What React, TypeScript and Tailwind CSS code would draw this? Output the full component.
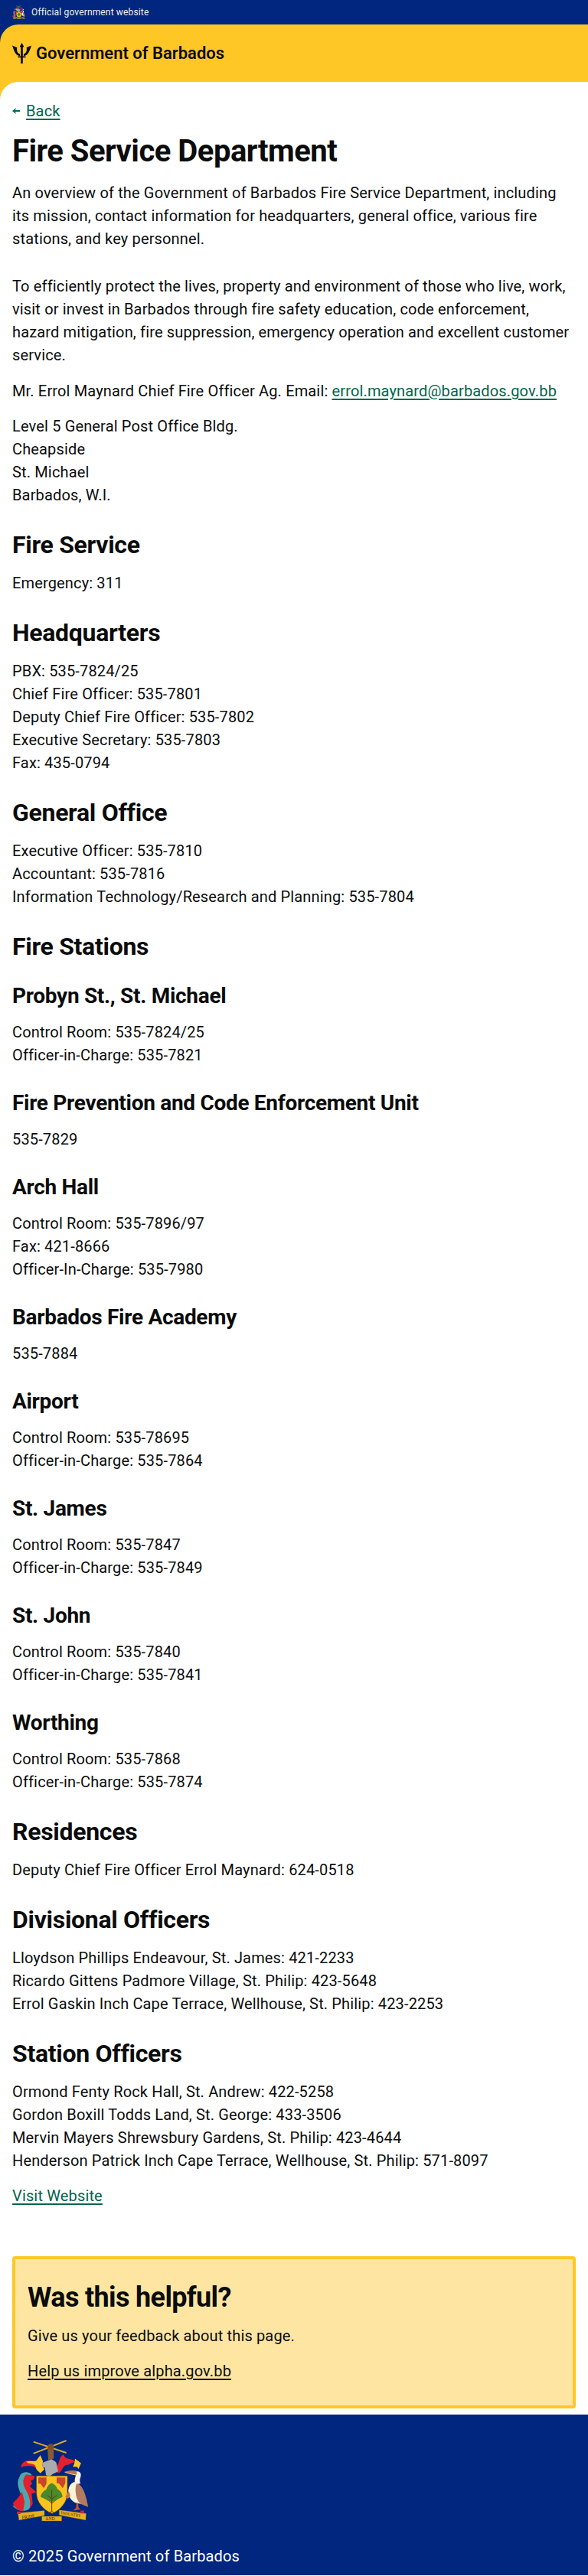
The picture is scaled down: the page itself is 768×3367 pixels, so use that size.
import React from "react";

const Crest = ({ className, ribbonText = false }: { className: string; ribbonText?: boolean }) => (
  <svg viewBox="50 148 300 322" className={className}>
    <path d="M133 156L262 199M262 151L133 202" stroke="#d6a92a" strokeWidth="6" />
    <path d="M188 178l24-6 1 50-22 4z" fill="#8a5a30" />
    <circle cx="201" cy="176" r="12" fill="#7a4f2a" />
    <path d="M83 256c4-26 34-34 60-20 10 4 18 8 24 14l-6 28c-10-6-12-18-22-22-12-8-36-8-56 0z" fill="#e3202e" />
    <path d="M104 234c14-4 30 0 40-4l16-22 10 24-2 18 8 14-16 16-14-14c-6-10-2-18-14-22-10-4-18 0-28-10z" fill="#fcc526" />
    <path d="M228 280c-6-14-6-30 4-40 2-16 8-28 18-34 6 8 6 14 18 16 14 2 24 6 34 14-12 0-22 2-30 10-14-2-20 8-26 16-2 8-8 14-18 18z" fill="#e3202e" />
    <path d="M296 222l24 18-10 22-6-8h-16c4-8 8-16 8-32z" fill="#fcc526" />
    <path d="M168 238l36-14 18 12 8 36-24 12-12 12-12-10-4-28-10-4z" fill="#a9abae" />
    <path d="M145 290h121v66c0 38-28 68-60 82-34-14-61-44-61-82z" fill="#fcc21e" stroke="#8a6a10" strokeWidth="1.5" />
    <path d="M152 296h32v24l-10 18-14-18h-8zM224 296h34v22l-10 20-14-18-10-2z" fill="#c9452c" />
    <path d="M205 345v85M205 398l-26-24M205 398l30-26M205 375l-20-18M205 375l22-18M205 430l-14 6M205 430l14 6" stroke="#5b3a18" strokeWidth="3" fill="none" />
    <path d="M205 318c14 6 20 16 22 24 10 4 20 16 20 30-8 6-16 6-24 14-8 6-30 6-36 0-8-6-20-10-26-14 2-14 12-24 22-28 4-12 10-22 22-26z" fill="#4b8a2a" />
    <path d="M205 345v50M205 380l-18-14M205 380l20-14" stroke="#5b3a18" strokeWidth="3" fill="none" />
    <path d="M82 284c14-14 36-10 44 2l-8 8c-12-4-22-2-24 12-2 14 12 30 20 46 8 18 12 40 6 60-4 14-24 18-40 14-14-4-24-12-30-20 20 6 34 4 38-10 4-16-4-32-10-48-6-18-10-34-2-50z" fill="#4ea6ae" />
    <path d="M104 284l34 6-4 14-12 6 6 10-10 10 26 24-18 6 4 40-14 22c8-24 2-48-8-68-10-18-18-30-14-48 2-10 6-18 10-22z" fill="#e3202e" />
    <path d="M52 398c12-14 26-26 36-46l10 40-6 38c-18-4-32-14-40-32z" fill="#e3202e" />
    <path d="M254 276c24-6 44-6 52-4 12 0 16 12 12 22-4 10-4 18 0 26l-22 0c-2-12 0-24 4-32-14-2-30-6-46-12z" fill="#f7f5ea" />
    <path d="M254 274c20-6 38-6 50-2l-2 14c-18-2-34-6-48-12z" fill="#c4764a" />
    <path d="M292 314c-20 8-26 34-20 54 8 18 20 28 34 30l30 4-28-88z" fill="#f8f4d8" />
    <path d="M302 320c20 0 36 34 46 92-20-8-36-12-42-28-6-14-12-44-4-64z" fill="#b57b5e" />
    <path d="M258 372l14-22 6 20-10 10z" fill="#c4764a" />
    <path d="M302 396l6 0 2 18 8 8-30 4 12-10z" fill="#c4542c" />
    <path d="M72 436l104-10v20l-100 18z" fill="#e7b020" stroke="#8a6a10" strokeWidth="1" />
    <path d="M166 449h78v18h-78z" fill="#e7b020" stroke="#8a6a10" strokeWidth="1" />
    <path d="M234 424l106 14-2 26-104-20z" fill="#e7b020" stroke="#8a6a10" strokeWidth="1" />
    <path d="M68 430h14v10H68zM318 426h14v12h-14z" fill="#e3202e" />
    {ribbonText && (
      <>
        <text x="88" y="460" fontSize="18" fontFamily="Liberation Serif" fill="#3a2c08" transform="rotate(-8 88 460)">PRIDE</text>
        <text x="180" y="465" fontSize="17" fontFamily="Liberation Serif" fill="#3a2c08">AND</text>
        <text x="240" y="440" fontSize="16" fontFamily="Liberation Serif" fill="#3a2c08" transform="rotate(9 240 440)">INDUSTRY</text>
      </>
    )}
  </svg>
);

const Trident = () => (
  <svg viewBox="0 0 74 80" className="w-[25px] h-[27px] shrink-0">
    <path
      fill="#0b0c0c"
      d="M37 0l8 14-4 4v34h11v5H41v23h-8V57H22v-5h11V18l-4-4zM0 10c7 3 12 5 19 8-3 12 1 23 11 26v7C13 49 7 33 0 10zM74 10c-7 3-12 5-19 8 3 12-1 23-11 26v7c17-2 23-18 30-41z"
    />
  </svg>
);

const BackArrow = () => (
  <svg viewBox="0 0 10 8" className="w-[10px] h-[8px]">
    <path d="M0 4l5-4-1 3h6v2H4l1 3z" fill="#006a5b" />
  </svg>
);

const H2 = ({ children, flush }: { children: React.ReactNode; flush?: boolean }) => (
  <h2 className={flush ? "text-[32px] leading-[40px] font-bold tracking-[-0.3px] mt-[30px]" : "text-[32px] leading-[40px] font-bold tracking-[-0.3px] mt-[30px] mb-[15px]"}>
    {children}
  </h2>
);
const H3 = ({ children, first }: { children: React.ReactNode; first?: boolean }) => (
  <h3 className={first ? "text-[28px] leading-[36px] font-bold tracking-[-0.3px] mt-[27px] mb-[14px]" : "text-[28px] leading-[36px] font-bold tracking-[-0.3px] mt-[30px] mb-[14px]"}>
    {children}
  </h3>
);
const P = ({ lines }: { lines: string[] }) => (
  <p className="text-[20px] leading-[30px] tracking-[0.15px]">
    {lines.map((l, i) => (
      <React.Fragment key={l}>
        {i > 0 && <br />}
        {l}
      </React.Fragment>
    ))}
  </p>
);

const sections: Array<[string, string, string[]]> = [
  ["h2", "Fire Service", ["Emergency: 311"]],
  ["h2", "Headquarters", ["PBX: 535-7824/25", "Chief Fire Officer: 535-7801", "Deputy Chief Fire Officer: 535-7802", "Executive Secretary: 535-7803", "Fax: 435-0794"]],
  ["h2", "General Office", ["Executive Officer: 535-7810", "Accountant: 535-7816", "Information Technology/Research and Planning: 535-7804"]],
  ["h2", "Fire Stations", []],
  ["h3", "Probyn St., St. Michael", ["Control Room: 535-7824/25", "Officer-in-Charge: 535-7821"]],
  ["h3", "Fire Prevention and Code Enforcement Unit", ["535-7829"]],
  ["h3", "Arch Hall", ["Control Room: 535-7896/97", "Fax: 421-8666", "Officer-In-Charge: 535-7980"]],
  ["h3", "Barbados Fire Academy", ["535-7884"]],
  ["h3", "Airport", ["Control Room: 535-78695", "Officer-in-Charge: 535-7864"]],
  ["h3", "St. James", ["Control Room: 535-7847", "Officer-in-Charge: 535-7849"]],
  ["h3", "St. John", ["Control Room: 535-7840", "Officer-in-Charge: 535-7841"]],
  ["h3", "Worthing", ["Control Room: 535-7868", "Officer-in-Charge: 535-7874"]],
  ["h2", "Residences", ["Deputy Chief Fire Officer Errol Maynard: 624-0518"]],
  ["h2", "Divisional Officers", ["Lloydson Phillips Endeavour, St. James: 421-2233", "Ricardo Gittens Padmore Village, St. Philip: 423-5648", "Errol Gaskin Inch Cape Terrace, Wellhouse, St. Philip: 423-2253"]],
  ["h2", "Station Officers", ["Ormond Fenty Rock Hall, St. Andrew: 422-5258", "Gordon Boxill Todds Land, St. George: 433-3506", "Mervin Mayers Shrewsbury Gardens, St. Philip: 423-4644", "Henderson Patrick Inch Cape Terrace, Wellhouse, St. Philip: 571-8097"]],
];

const linkClass = "text-[#00654a] underline decoration-2 underline-offset-[3px]";

export default function App() {
  return (
    <div className="font-['Roboto',sans-serif] text-[#0b0c0c] bg-white">
      <div className="bg-[#00267f] h-[32px] px-4 flex items-center gap-2">
        <Crest className="w-[17px] h-[18px]" />
        <span className="text-[#f0f0f0] text-[12px] tracking-[0.15px]">Official government website</span>
      </div>
      <div className="bg-[#00267f]">
        <div className="bg-[#ffc726] rounded-tl-[24px] h-[75px] px-4 flex items-center gap-[6px]">
          <Trident />
          <span className="text-[22px] font-semibold">Government of Barbados</span>
        </div>
      </div>
      <div className="bg-[#ffc726]">
        <div className="bg-white rounded-tl-[24px] px-4 pt-[23px]">
          <div className="flex items-center gap-2 text-[20px] leading-[30px] tracking-[0.15px]">
            <BackArrow />
            <a className={linkClass}>Back</a>
          </div>
          <h1 className="text-[40px] leading-[50px] font-bold tracking-[-0.5px] mt-[13px] mb-[14px]">Fire Service Department</h1>
          <p className="text-[20px] leading-[30px] tracking-[0.15px] mb-[32px]">
            An overview of the Government of Barbados Fire Service Department, including its mission, contact information for headquarters, general office, various fire stations, and key personnel.
          </p>
          <p className="text-[20px] leading-[30px] tracking-[0.15px] mb-[17px]">
            To efficiently protect the lives, property and environment of those who live, work, visit or invest in Barbados through fire safety education, code enforcement, hazard mitigation, fire suppression, emergency operation and excellent customer service.
          </p>
          <p className="text-[20px] leading-[30px] tracking-[0.15px] mb-[16px]">
            Mr. Errol Maynard Chief Fire Officer Ag. Email: <a className={linkClass}>errol.maynard@barbados.gov.bb</a>
          </p>
          <P lines={["Level 5 General Post Office Bldg.", "Cheapside", "St. Michael", "Barbados, W.I."]} />
          {sections.map(([tag, title, lines]) => (
            <section key={title}>
              {tag === "h2" ? <H2 flush={lines.length === 0}>{title}</H2> : <H3 first={title.startsWith("Probyn")}>{title}</H3>}
              {lines.length > 0 && <P lines={lines} />}
            </section>
          ))}
          <p className="text-[20px] leading-[30px] tracking-[0.15px] mt-[16px]">
            <a className={linkClass}>Visit Website</a>
          </p>
          <div className="mt-[64px] bg-[#fee6a2] border-4 border-[#ffc726] rounded-[4px] px-[16px] pt-[28px] pb-[30px]">
            <h2 className="text-[36px] leading-[44px] font-bold tracking-[-0.65px] mb-[13px]">Was this helpful?</h2>
            <p className="text-[20px] leading-[30px] tracking-[0.15px] mb-[16px]">Give us your feedback about this page.</p>
            <p className="text-[20px] leading-[30px] tracking-[0.15px]">
              <a className="underline decoration-2 underline-offset-[3px]">Help us improve alpha.gov.bb</a>
            </p>
          </div>
        </div>
      </div>
      <footer className="bg-[#00267f] mt-[8px] h-[210px] px-4 pt-[33px] text-white">
        <Crest ribbonText className="w-[100px] h-[107px]" />
        <p className="text-[20px] leading-[30px] tracking-[0.15px] mt-[30px]">© 2025 Government of Barbados</p>
      </footer>
    </div>
  );
}
